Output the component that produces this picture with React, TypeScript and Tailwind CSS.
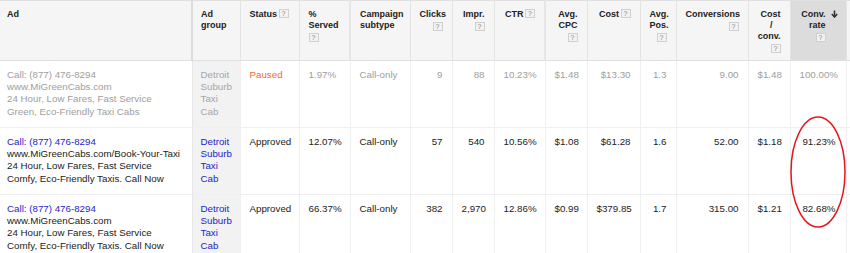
import React from 'react';

const Help = ({ className = '' }: { className?: string }) => (
  <span
    className={`inline-flex items-center justify-center w-[10px] h-[9px] border border-[#d0d0d0] bg-[#f2f2f2] text-[7px] leading-none font-normal text-[#888] align-middle ${className}`}
  >
    ?
  </span>
);

const DownArrow = () => (
  <svg width="7" height="8" viewBox="0 0 7 8" className="inline-block ml-[5px] -mt-[2px] align-middle">
    <path d="M3.5 0.5 V6.5" stroke="#333" strokeWidth="1.6" />
    <path d="M0.8 4 L3.5 7 L6.2 4" fill="none" stroke="#333" strokeWidth="1.6" />
  </svg>
);

type Row = {
  muted?: boolean;
  ad: string[];
  status: string;
  served: string;
  subtype: string;
  nums: string[];
};

const rows: Row[] = [
  {
    muted: true,
    ad: ['Call: (877) 476-8294', 'www.MiGreenCabs.com', '24 Hour, Low Fares, Fast Service', 'Green, Eco-Friendly Taxi Cabs'],
    status: 'Paused',
    served: '1.97%',
    subtype: 'Call-only',
    nums: ['9', '88', '10.23%', '$1.48', '$13.30', '1.3', '9.00', '$1.48', '100.00%'],
  },
  {
    ad: ['Call: (877) 476-8294', 'www.MiGreenCabs.com/Book-Your-Taxi', '24 Hour, Low Fares, Fast Service', 'Comfy, Eco-Friendly Taxis. Call Now'],
    status: 'Approved',
    served: '12.07%',
    subtype: 'Call-only',
    nums: ['57', '540', '10.56%', '$1.08', '$61.28', '1.6', '52.00', '$1.18', '91.23%'],
  },
  {
    ad: ['Call: (877) 476-8294', 'www.MiGreenCabs.com', '24 Hour, Low Fares, Fast Service', 'Comfy, Eco-Friendly Taxis. Call Now'],
    status: 'Approved',
    served: '66.37%',
    subtype: 'Call-only',
    nums: ['382', '2,970', '12.86%', '$0.99', '$379.85', '1.7', '315.00', '$1.21', '82.68%'],
  },
];

const widths = [192, 48, 59, 51, 60, 42, 42, 51, 42, 53, 36, 72, 42, 56, 4];

const th = 'align-top pt-[8px] px-[9px] border-r border-[#e3e3e3] font-bold text-[9px] leading-[11px] text-[#222] whitespace-nowrap';
const td = 'align-top pt-[8px] pb-[8px] px-[9px] border-r border-b border-[#efefef] text-[9.75px] leading-[12.2px]';

export default function App() {
  return (
    <div className="relative w-[850px] h-[253px] overflow-hidden bg-white" style={{ fontFamily: '"Liberation Sans", Arial, sans-serif' }}>
      <table className="table-fixed border-collapse w-[850px]">
        <colgroup>
          {widths.map((w, i) => (
            <col key={i} style={{ width: w }} />
          ))}
        </colgroup>
        <thead>
          <tr className="h-[60px] bg-[#f5f5f5] border-t border-b border-[#e0e0e0]">
            <th className={`${th} text-left pl-[7px] border-r-2 border-r-[#dcdcdc]`}>Ad</th>
            <th className={`${th} text-left pl-[8px]`}>
              <div>Ad</div>
              <div>group</div>
            </th>
            <th className={`${th} text-left pr-0`}>
              Status <Help className="-ml-[1px] -mt-[2px]" />
            </th>
            <th className={`${th} text-left border-r-2 border-r-[#e6e6e6]`}>
              <div>%</div>
              <div>Served</div>
              <div className="mt-[2px] leading-none"><Help /></div>
            </th>
            <th className={`${th} text-left`}>
              <div>Campaign</div>
              <div>subtype</div>
            </th>
            <th className={`${th} text-right`}>
              <div>Clicks</div>
              <div className="mt-[2px] leading-none"><Help /></div>
            </th>
            <th className={`${th} text-right`}>
              <div>Impr.</div>
              <div className="mt-[2px] leading-none"><Help /></div>
            </th>
            <th className={`${th} text-right border-r-2 border-r-[#e6e6e6]`}>
              CTR <Help className="-ml-[1px] -mt-[2px]" />
            </th>
            <th className={`${th} text-right`}>
              <div>Avg.</div>
              <div>CPC</div>
              <div className="mt-[2px] leading-none"><Help /></div>
            </th>
            <th className={`${th} text-right`}>
              Cost <Help className="-ml-[1px] -mt-[2px]" />
            </th>
            <th className={`${th} text-right`}>
              <div>Avg.</div>
              <div>Pos.</div>
              <div className="mt-[2px] leading-none"><Help /></div>
            </th>
            <th className={`${th} text-right`}>
              <div>Conversions</div>
              <div className="mt-[2px] leading-none"><Help /></div>
            </th>
            <th className={`${th} text-right`}>
              <div>Cost</div>
              <div className="pr-[8px]">/</div>
              <div>conv.</div>
              <div className="mt-[2px] leading-none"><Help /></div>
            </th>
            <th className={`${th} text-right pr-[8px] bg-[#dcdcdc]`}>
              <div>
                Conv.
                <DownArrow />
              </div>
              <div className="pr-[12px]">rate</div>
              <div className="mt-[2px] leading-none pr-[12px]"><Help /></div>
            </th>
            <th className="border-0"></th>
          </tr>
        </thead>
        <tbody>
          {rows.map((r, i) => {
            const txt = r.muted ? 'text-[#9e9e9e]' : 'text-[#222]';
            const link = r.muted ? 'text-[#9e9e9e]' : 'text-[#2424c8]';
            return (
              <tr key={i} className="h-[67px]">
                <td className={`${td} pl-[7px] text-left border-r-[#e6e6e6] whitespace-nowrap`}>
                  <div className={link}>{r.ad[0]}</div>
                  {r.ad.slice(1).map((l, j) => (
                    <div key={j} className={txt}>{l}</div>
                  ))}
                </td>
                <td className={`${td} pl-[8px] bg-[#f2f2f2] text-left leading-[11.8px] ${r.muted ? 'text-[#a6a6a6]' : 'text-[#2424c8]'}`}>
                  <div>Detroit</div>
                  <div>Suburb</div>
                  <div>Taxi</div>
                  <div>Cab</div>
                </td>
                <td className={`${td} text-left ${r.muted ? 'text-[#f26a30]' : 'text-[#222]'}`}>{r.status}</td>
                <td className={`${td} text-left ${txt}`}>{r.served}</td>
                <td className={`${td} text-left ${txt}`}>{r.subtype}</td>
                {r.nums.map((n, j) => (
                  <td key={j} className={`${td} text-right ${txt} ${j === 8 ? 'pr-[10px]' : ''}`}>{n}</td>
                ))}
                <td className="border-b border-[#efefef]"></td>
              </tr>
            );
          })}
        </tbody>
      </table>
      <svg className="absolute left-0 top-0 pointer-events-none" width="850" height="253">
        <ellipse cx="818" cy="172" rx="27" ry="55" fill="none" stroke="#e4161b" strokeWidth="1.5" />
      </svg>
    </div>
  );
}
